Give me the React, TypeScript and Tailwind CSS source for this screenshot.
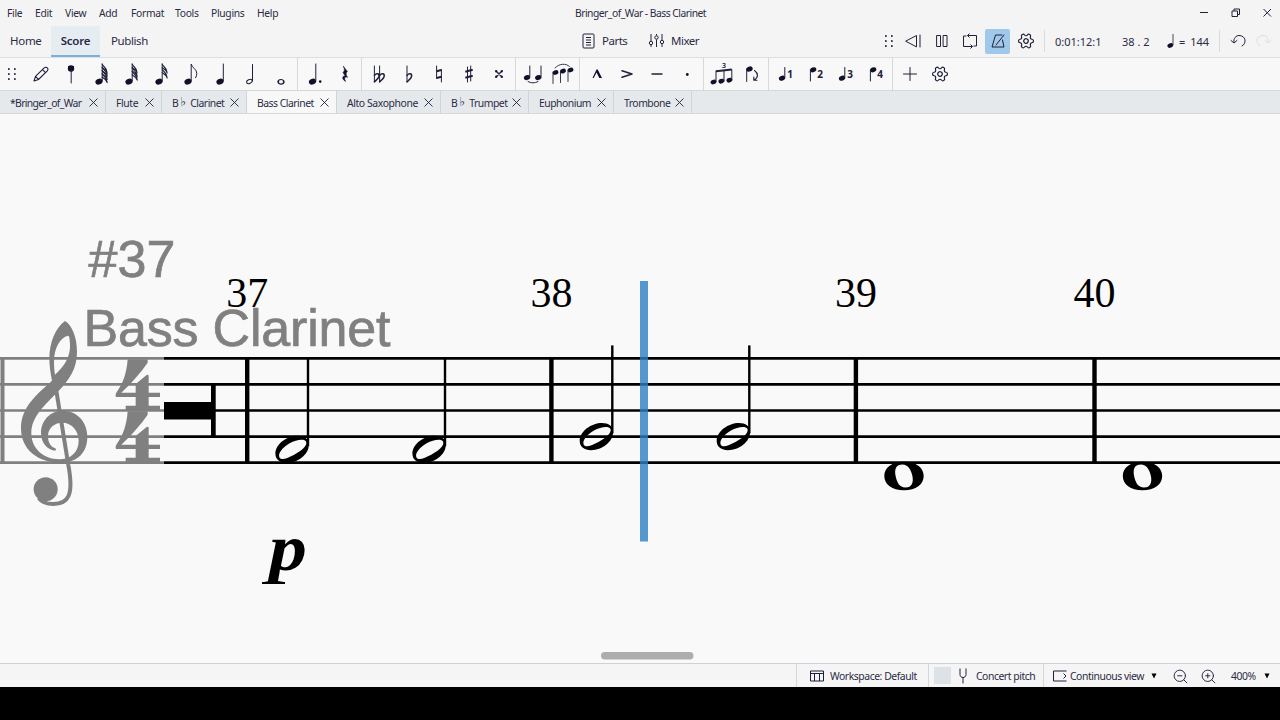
import { ReactNode } from "react";
import { Settings, ZoomIn, ZoomOut } from "lucide-react";
import clsx from "clsx";

const INK = "#20203a";

interface IconProps {
  children: ReactNode;
  className?: string;
}

// 30x32 cell, origin in the middle
function Cell({ children, className }: IconProps) {
  return (
    <svg
      viewBox="-15 -16 30 32"
      className={clsx("h-8 w-[30px] shrink-0", className)}
      fill="none"
      stroke={INK}
      strokeWidth={1}
      strokeLinecap="round"
      strokeLinejoin="round"
    >
      {children}
    </svg>
  );
}

function Head({ x, y, r = 3.7 }: { x: number; y: number; r?: number }) {
  return (
    <ellipse
      cx={x}
      cy={y}
      rx={r}
      ry={r * 0.76}
      transform={`rotate(-22 ${x} ${y})`}
      fill="#10102a"
      stroke="none"
    />
  );
}

function Gear({ className }: { className?: string }) {
  return (
    <svg viewBox="-12 -12 24 24" className={clsx("shrink-0", className)} fill="none" stroke={INK}>
      <g transform="rotate(30)">
        <Settings x={-12} y={-12} size={24} strokeWidth={1.6} color={INK} />
      </g>
    </svg>
  );
}

function Grip() {
  return (
    <svg viewBox="0 0 10 14" className="h-3.5 w-2.5 shrink-0" fill={INK}>
      {[2, 7, 12].map((y) => (
        <g key={y}>
          <rect x={1} y={y - 0.8} width={1.7} height={1.7} />
          <rect x={7} y={y - 0.8} width={1.7} height={1.7} />
        </g>
      ))}
    </svg>
  );
}

function Divider({ className }: { className?: string }) {
  return (
    <div className={clsx("flex h-8 w-1 shrink-0 pl-px", className)}>
      <div className="h-full w-px bg-[#d3d9dc]" />
    </div>
  );
}

function Flag({ y, x = 0.5 }: { y: number; x?: number }) {
  return (
    <path
      d={`M${x} ${y}c.6 2.800 5.200 3.600 5 9c-.8-3-2.800-4-5-5.400`}
      strokeWidth={1.1}
    />
  );
}

function Flat({ x }: { x: number }) {
  return (
    <g>
      <path d={`M${x} -8V8`} />
      <path d={`M${x} 1.4c2-2.4 5-2 4.6.8c-.3 2.400-2.600 4-4.600 5.600`} strokeWidth={1.5} />
    </g>
  );
}

const durations: ReactNode[] = [
  <path key="p" d="M-7 7l1.500-4.600L3.200-6.100c1-1 2.400-.9 3.200 0c.8.8.8 2-.1 2.900L-2.500 5.500zM-5.500 2.400l3 3M1.500-4.400l3 3" strokeWidth={1.1} />,
  <g key="l">
    <circle cx={0} cy={-5.500} r={3.200} fill="#10102a" stroke="none" />
    <path d="M-3-8h6v3h-6z" fill="#10102a" stroke="none" />
    <path d="M.2-4V9" />
  </g>,
  <g key="64">
    <Head x={-2} y={7.600} />
    <path d="M1.200 7V-10" />
    {[-10, -6.800, -3.600, -0.400].map((y) => (
      <Flag key={y} y={y} x={1.2} />
    ))}
  </g>,
  <g key="32">
    <Head x={-2} y={7.600} />
    <path d="M1.200 7V-10" />
    {[-10, -6.400, -2.800].map((y) => (
      <Flag key={y} y={y} x={1.2} />
    ))}
  </g>,
  <g key="16">
    <Head x={-2} y={7.600} />
    <path d="M1.200 7V-10" />
    <Flag y={-10} x={1.2} />
    <Flag y={-5} x={1.2} />
  </g>,
  <g key="8">
    <Head x={-3} y={7.600} />
    <path d="M.2 7V-10c.8 4 5.600 5 5.600 9.500c0 1.500-.5 3-1.200 4.200" />
  </g>,
  <g key="4">
    <Head x={-1} y={7.600} />
    <path d="M2.300 7V-10" />
  </g>,
  <g key="2">
    <ellipse cx={-1.600} cy={7.500} rx={2.900} ry={1.900} transform="rotate(-25 -1.600 7.500)" />
    <path d="M1.500 7V-9.500" />
  </g>,
  <g key="1">
    <ellipse cx={0} cy={7.800} rx={2.900} ry={2.300} strokeWidth={1.200} />
    <path d="M-2.600 7v1.600M2.600 7v1.600" strokeWidth={1.500} />
  </g>,
];

const dots: ReactNode[] = [
  <g key="d">
    <Head x={-2.500} y={7.600} />
    <path d="M.8 7V-10" />
    <circle cx={5.200} cy={7.600} r={1.300} fill="#10102a" stroke="none" />
  </g>,
  <path
    key="r"
    d="M-1.500-7.500L2.400-2.500C.8-1 .6.4 2.600 3.400C.2 2.400-1.400 3.600.6 7.400C-3.400 5.400-3 1.400.2 2L-2-1.600C-.2-3.200-.2-4.600-1.500-7.500z"
    fill="#10102a"
    strokeWidth={0.6}
  />,
];

const accidentals: ReactNode[] = [
  <g key="bb">
    <Flat x={-4.600} />
    <Flat x={0.600} />
  </g>,
  <Flat key="b" x={-2} />,
  <g key="n">
    <path d="M-2.400-8V4.500M2.400-4.500V8" />
    <path d="M-2.400-2.800L2.400-4M-2.400 4L2.400 2.800" strokeWidth={2} strokeLinecap="butt" />
  </g>,
  <g key="s">
    <path d="M-1.500-7V8M1.700-8V7" />
    <path d="M-3.700-2.200L3.700-4.200M-3.700 3.800L3.700 1.800" strokeWidth={2} strokeLinecap="butt" />
  </g>,
  <g key="x">
    <path d="M-3-3L3 3M3-3L-3 3" strokeWidth={1.400} />
    <path d="M-3.800-3.800h2v2h-2zM1.800-3.800h2v2h-2zM-3.800 1.800h2v2h-2zM1.800 1.800h2v2h-2z" fill="#10102a" stroke="none" />
  </g>,
];

const ties: ReactNode[] = [
  <g key="t">
    <Head x={-6} y={3.600} r={3.200} />
    <Head x={5.200} y={3.600} r={3.200} />
    <path d="M-3.200 3V-8M8-8V3M-5 7.500c3 1.800 7 1.800 10 0" />
  </g>,
  <g key="s">
    <Head x={-7.500} y={-1.500} r={3} />
    <Head x={0} y={-2.900} r={3} />
    <Head x={7.500} y={-4} r={3} />
    <path d="M-10 9.500V-1M-2.500 8.500V-2.500M5 7.500V-3.500M-8-6c4-4.500 11-5 14.500-1.500" strokeWidth={0.9} />
  </g>,
];

const articulations: ReactNode[] = [
  <path key="m" d="M-4.500 4L-.5-4.500h1.200L5 4H2.300L-.4-1.500L-3.300 4z" fill="#10102a" stroke="none" />,
  <path key="a" d="M-5-3.300L5 0L-5 3.300" strokeWidth={1.500} />,
  <path key="t" d="M-5 0H5" strokeWidth={1.300} />,
  <circle key="s" cx={0.300} cy={0.500} r={1.400} fill="#10102a" stroke="none" />,
];

const tuplets: ReactNode[] = [
  <g key="3">
    <Head x={-8.500} y={8} r={3} />
    <Head x={-0.600} y={7.200} r={3} />
    <Head x={7.400} y={6.200} r={3} />
    <path d="M-6-3V7.500M2-3.500V7M9.800-4.200V6" />
    <path d="M-6-2.800L9.800-4.400" strokeWidth={2} strokeLinecap="butt" />
    <text x={2} y={-6} textAnchor="middle" fontSize={7.5} fontWeight={600} fontFamily="Noto Sans" fill={INK} stroke="none">
      3
    </text>
  </g>,
  <g key="f">
    <Head x={-2.500} y={-5} r={3.300} />
    <path d="M-5.300-5V7.500" />
    <path d="M2.500-3.500C6.500-.5 6.500 3.500 2 6M1.800 3v3.300h3.200" strokeWidth={1.100} />
  </g>,
];

function Voice({ n }: { n: number }) {
  const up = n % 2 === 1;
  return (
    <Cell>
      {up ? (
        <>
          <Head x={-4} y={4.200} r={3.200} />
          <path d="M-1.200 4V-6.500" />
        </>
      ) : (
        <>
          <Head x={-2.800} y={-4.200} r={3.200} />
          <path d="M-5.600-4V7" />
        </>
      )}
      <text
        x={4}
        y={4}
        textAnchor="middle"
        fontSize={10}
        fontWeight={700}
        fontFamily="Noto Sans"
        fill={INK}
        stroke="none"
      >
        {n}
      </text>
    </Cell>
  );
}

function Group({ items }: { items: ReactNode[] }) {
  return (
    <div className="flex shrink-0">
      {items.map((item, i) => (
        <Cell key={i}>{item}</Cell>
      ))}
    </div>
  );
}

const menu = [
  { label: "File", width: "w-7" },
  { label: "Edit", width: "w-[30px]" },
  { label: "View", width: "w-[34px]" },
  { label: "Add", width: "w-8" },
  { label: "Format", width: "w-11" },
  { label: "Tools", width: "w-9" },
  { label: "Plugins", width: "w-[46px]" },
  { label: "Help", width: "w-8" },
];

function TitleBar() {
  return (
    <header className="flex h-[26px] items-center pl-[7px] text-[10.3px] tracking-[-0.3px]">
      {menu.map((m) => (
        <span key={m.label} className={clsx("shrink-0 pt-0.5", m.width)}>
          {m.label}
        </span>
      ))}
      <span className="ml-[286px] w-[134px] shrink-0 pt-0.5 tracking-[-0.5px] whitespace-nowrap">
        Bringer_of_War - Bass Clarinet
      </span>
      <svg viewBox="0 0 80 12" className="mr-2 ml-auto h-3 w-20" fill="none" stroke={INK} strokeWidth={1}>
        <path d="M8 5.500h8" />
        <path d="M40 4h5.500v5.500H40zM42 4V2h5.500v5.500h-2" />
        <path d="M71.500 2l7.500 7.500M79 2L71.500 9.500" />
      </svg>
    </header>
  );
}

function MainToolbar() {
  return (
    <div className="flex h-8 items-center border-b border-[#dcdfe1] pb-px text-[11.5px]">
      <span className="w-[51px] pl-[10px] tracking-[-0.3px]">Home</span>
      <span className="-mb-px flex h-[31px] w-[49px] items-center justify-center self-end border-b-2 border-[#7db0d8] bg-[#e5edf3] font-semibold tracking-[-0.2px]">
        Score
      </span>
      <span className="w-[482px] pl-[11px] tracking-[-0.4px]">Publish</span>
      <svg viewBox="0 0 13 16" className="h-4 w-[13px] shrink-0" fill="none" stroke={INK}>
        <rect x={1} y={1} width={11} height={14} rx={1} />
        <path d="M4 4.500h5M4 7h5M4 9.500h5M4 12h5" />
      </svg>
      <span className="ml-[7px] w-[46px] tracking-[-0.5px]">Parts</span>
      <svg viewBox="0 0 17 16" className="h-4 w-[17px] shrink-0" fill="none" stroke={INK}>
        <path d="M3 1v7M3 12v2M8.500 1v1.500M8.500 6.500V14M14 1v6M14 11v3" />
        <circle cx={3} cy={10} r={1.700} />
        <circle cx={8.500} cy={4.500} r={1.700} />
        <circle cx={14} cy={9} r={1.700} />
      </svg>
      <span className="ml-1.5 w-[213px] tracking-[-0.5px]">Mixer</span>
      <Grip />
      <div className="ml-[5px] flex items-center">
        <Cell className="-mr-px">
          <path d="M-8 0L2.500-5.500V5.500zM6-6V6" />
        </Cell>
        <Cell className="-mr-px -ml-px">
          <path d="M-5-5.500h3.500v11H-5zM1.500-5.500H5v11H1.500z" />
        </Cell>
        <Cell className="-mr-px -ml-px">
          <path d="M-3.500-5H-6.500V5.500H2.500M3.500 5H6.500V-5.500H-2.500M-.5-7.500l-2 2l2 2M.5 3.500l2 2l-2 2" strokeLinecap="butt" />
        </Cell>
        <span className="ml-px flex h-[25px] w-[25px] items-center justify-center overflow-hidden rounded-[2px] bg-[#a0c8ea]">
          <Cell>
            <path d="M4-6H-2.500L-6 6H6L4.500-1M-2 4L6-6" />
          </Cell>
        </span>
        <Gear className="ml-[7px] h-[18px] w-[18px]" />
      </div>
      <div className="ml-[9px] h-[22px] w-px bg-[#d8dbde]" />
      <span className="ml-2.5 w-[67px] pt-0.5 text-[11px]">0:01:12:1</span>
      <span className="w-[45px] pt-0.5 text-[11px]">38 . 2</span>
      <svg viewBox="0 0 8 16" className="h-4 w-2 shrink-0" fill="none" stroke={INK}>
        <Head x={3.300} y={12.500} r={3} />
        <path d="M6 12V1" strokeWidth={0.8} />
      </svg>
      <span className="ml-1 w-10 pt-0.5 text-[11px] whitespace-nowrap [word-spacing:2px]">= 144</span>
      <div className="h-[22px] w-px bg-[#d8dbde]" />
      <Cell className="ml-[3px] -mr-1">
        <path d="M-7-.5l3 2.500l3-2.500M-4 1.500C-5-3-1.500-5.500 1-5.500C8-5.500 9 2.500 4 5" />
      </Cell>
      <Cell className="-mr-2 opacity-10">
        <path d="M7-.5l-3 2.500l-3-2.500M4 1.500C5-3 1.500-5.500-1-5.500C-8-5.500-9 2.500-4 5" />
      </Cell>
    </div>
  );
}

function NoteToolbar() {
  return (
    <div className="flex h-8 items-center bg-[#f8f8f9]">
      <div className="flex w-[26px] pl-[7px]">
        <Grip />
      </div>
      <Group items={durations} />
      <Divider />
      <Group items={dots} />
      <Divider />
      <Group items={accidentals} />
      <Divider />
      <Group items={ties} />
      <Divider />
      <Group items={articulations} />
      <Divider className="mr-px" />
      <Group items={tuplets} />
      <Divider />
      {[1, 2, 3, 4].map((n) => (
        <Voice key={n} n={n} />
      ))}
      <Divider />
      <Cell>
        <path d="M-6.500 0H6.500M0-6.500V6.500" />
      </Cell>
      <Gear className="ml-[5.5px] h-[18px] w-[18px]" />
    </div>
  );
}

const tabs = [
  { label: "*Bringer_of_War", width: "w-[106px]", tracking: "tracking-[-0.65px]" },
  { label: "Flute", width: "w-14", tracking: "tracking-[-0.4px]" },
  { label: "B♭ Clarinet", width: "w-[85px]", tracking: "tracking-[-0.5px]" },
  { label: "Bass Clarinet", width: "w-[90px]", tracking: "tracking-[-0.5px]", active: true },
  { label: "Alto Saxophone", width: "w-[104px]", tracking: "tracking-[-0.4px]" },
  { label: "B♭ Trumpet", width: "w-[88px]", tracking: "tracking-[-0.5px]" },
  { label: "Euphonium", width: "w-[85px]", tracking: "tracking-[-0.5px]" },
  { label: "Trombone", width: "w-[78px]", tracking: "tracking-[-0.5px]" },
];

function TabLabel({ label }: { label: string }) {
  if (!label.includes("♭")) return <span className="pt-[3px]">{label}</span>;
  const [before, after] = label.split("♭");
  return (
    <span className="flex items-center pt-[3px]">
      {before}
      <span className="w-[9px] pb-0.5 pl-0.5 font-['DejaVu_Sans'] text-[12px] leading-3">♭</span>
      <span className="pl-[3px]">{after.trim()}</span>
    </span>
  );
}

function Tabs() {
  return (
    <div className="flex h-6 border-y border-[#d3d8db] bg-[#e5e9ec] text-[10.4px]">
      {tabs.map((t) => (
        <div
          key={t.label}
          className={clsx(
            "flex shrink-0 items-center justify-between border-r border-[#ced4d7] pr-[7px] pl-2.5 whitespace-nowrap",
            t.width,
            t.tracking,
            t.active && "bg-[#f8f8f9]"
          )}
        >
          <TabLabel label={t.label} />
          <svg viewBox="0 0 9 9" className="mt-px h-[9px] w-[9px]" stroke={INK} strokeWidth={0.9}>
            <path d="M.5.5l8 8M8.500.5l-8 8" />
          </svg>
        </div>
      ))}
    </div>
  );
}

const staffLines = [358.4, 384.4, 410.5, 436.6, 462.6];
const halfNotes = [
  { x: 292.2, y: 449.3 },
  { x: 429.2, y: 449.3 },
  { x: 596.5, y: 436.6 },
  { x: 733.5, y: 436.6 },
];
const measures = [
  { x: 247.2, n: 37 },
  { x: 551.4, n: 38 },
  { x: 855.9, n: 39 },
  { x: 1094.5, n: 40 },
];

function Four({ y }: { y: number }) {
  return (
    <path
      transform={`translate(0 ${y})`}
      d="M383 418H443V428C424 456 392 492 364 518H407V492L440 465Q446 462 446 468V518H480V531H446V557H480V573H377V557H407V531H348Q344 526 349 518C370 490 380 458 383 418Z"
    />
  );
}

function Score() {
  return (
    <main className="h-[549px] bg-[#f9f9f9]">
      <svg viewBox="0 114 1280 549" className="block h-full w-full">
        <g stroke="#000" strokeWidth={2.700}>
          {staffLines.map((y) => (
            <path key={y} d={`M164 ${y}H1280`} />
          ))}
        </g>
        <g stroke="#808080" strokeWidth={2.700}>
          {staffLines.map((y) => (
            <path key={y} d={`M0 ${y}H164`} />
          ))}
        </g>
        <rect x={0.500} y={357} width={4} height={107} fill="#808080" />

        {measures.map((m) => (
          <g key={m.n}>
            <rect x={m.x - 2.200} y={357} width={4.400} height={107} />
            <text x={m.x} y={306.500} textAnchor="middle" fontSize={42} fontFamily="Liberation Serif">
              {m.n}
            </text>
          </g>
        ))}

        <rect x={164} y={402} width={48} height={17.500} />
        <rect x={211} y={384} width={4.700} height={53.500} />

        {halfNotes.map((h) => (
          <g key={h.x} transform={`translate(${h.x} ${h.y})`}>
            <path
              fillRule="evenodd"
              d="M-16.800 4.500C-16.800-5.500-5-13.600 5.500-13.600C12-13.600 16.600-10.500 16.600-4.500C16.600 5.500 5.500 13.600-5.500 13.600C-12 13.600-16.800 10.500-16.800 4.500ZM-12.600 8.500C-10.500 11.500-4 8.500 2 5.500C8.500 2 15.500-3.500 14-7.500C12-11 4-9.500-2.500-6C-9-2.200-15 4-12.600 8.500Z"
            />
            <rect x={14.600} y={-91.200} width={2.400} height={88} />
          </g>
        ))}

        {[904, 1142.500].map((x) => (
          <path
            key={x}
            transform={`translate(${x} 476)`}
            fillRule="evenodd"
            d="M0-14.200C12-14.200 19.700-8.500 19.700 0C19.700 8.500 12 14.200 0 14.200C-12 14.200-19.700 8.500-19.700 0C-19.700-8.500-12-14.200 0-14.200ZM-1.500-11.600C-8-11.600-9.600-7-8.500-.5C-7.200 6.500-4.500 11.500 1.500 11.500C8 11.500 9.500 6.500 8.500 .5C7.200-6.500 4-11.600-1.500-11.600Z"
          />
        ))}

        <text
          transform="translate(269 569.500) scale(1.150 1)"
          fontSize={66}
          fontWeight={700}
          fontStyle="italic"
          fontFamily="Liberation Serif"
        >
          p
        </text>
        <path d="M262 583H285" stroke="#000" strokeWidth={2} />

        <g fill="#808080" stroke="#808080" strokeWidth={0.700} fontFamily="Liberation Sans" fontSize={52}>
          <text x={88.500} y={277} textLength={87}>#37</text>
          <text x={83.500} y={345.500} textLength={307}>Bass Clarinet</text>
        </g>

        {/* clef and time signature */}
        <g transform="translate(0 220) scale(.33333)" fill="#808080">
          <path
            fillRule="evenodd"
            d="M195 303C165 325 148 370 148 415C148 440 152 460 156 482C112 522 63 560 63 625C63 690 115 728 180 728C235 728 262 695 262 650C262 602 228 572 188 572C150 572 123 602 123 640C123 670 145 692 166 692Q170 688 166 685C150 680 143 663 144 645C146 622 165 608 187 608C215 608 236 632 236 662C236 698 210 718 178 718C130 718 94 685 94 640C94 590 135 555 172 517C210 477 231 445 231 395C231 350 215 315 195 303ZM204 347C180 352 162 385 162 425C162 440 163 452 165 464C195 437 212 408 210 372C209 355 208 347 204 347Z"
          />
          <path
            d="M167 500L205 735C222 825 205 852 160 852C142 852 124 846 116 834"
            fill="none"
            stroke="#808080"
            strokeWidth={12}
          />
          <circle cx={137} cy={808} r={36} />
          <Four y={0} />
          <Four y={156} />
        </g>

        <rect x={640} y={281} width={8} height={260.500} fill="#2b80c2" fillOpacity={0.8} />
        <rect x={601} y={652} width={92.500} height={7.500} rx={3.700} fill="#adadad" />
      </svg>
    </main>
  );
}

function StatusBar() {
  return (
    <footer className="flex h-6 items-center justify-end border-t border-[#cfd2d4] bg-[#f5f5f6] text-[10.4px] tracking-[-0.45px] whitespace-nowrap">
      <div className="flex h-full w-[132px] shrink-0 items-center border-l border-[#d3d7da] pt-px pl-[13px]">
        <svg viewBox="0 0 14 12" className="h-3 w-3.5" fill="none" stroke={INK}>
          <path d="M.5 1h13v10H.500zM.5 3.500h13M4.500 3.500V11M9.500 3.500V11" />
        </svg>
        <span className="ml-1.5 pt-px">Workspace: Default</span>
      </div>
      <div className="flex h-full w-[115px] shrink-0 items-center border-l border-[#d3d7da] pl-[5px]">
        <span className="h-[17px] w-[17px] bg-[#dde2e6]" />
        <svg viewBox="0 0 10 16" className="ml-[7px] h-4 w-2.5" fill="none" stroke={INK}>
          <path d="M2 .5V6.500C2 10.500 8 10.500 8 6.500V.5M5 9.500V15.500" />
        </svg>
        <span className="ml-2 pt-0.5">Concert pitch</span>
      </div>
      <div className="flex h-full w-[237px] shrink-0 items-center border-l border-[#d3d7da] pt-px pl-[9px]">
        <svg viewBox="0 0 14 12" className="h-3 w-3.5 shrink-0" fill="none" stroke={INK}>
          <path d="M13.500 1H.5V11H13.500M10.500 3.500L13 6l-2.500 2.500" />
        </svg>
        <span className="ml-[3px] w-[81px] pt-px">Continuous view</span>
        <svg viewBox="0 0 6 6" className="h-1.5 w-1.5 shrink-0">
          <path d="M.5.5h5L3 5.500z" />
        </svg>
        <ZoomOut className="ml-[15px] h-[17px] w-[17px] shrink-0" strokeWidth={1.400} />
        <ZoomIn className="ml-[11px] h-[17px] w-[17px] shrink-0" strokeWidth={1.400} />
        <span className="ml-[14px] w-[33px] pt-px">400%</span>
        <svg viewBox="0 0 6 6" className="h-1.5 w-1.5 shrink-0">
          <path d="M.5.5h5L3 5.500z" />
        </svg>
      </div>
    </footer>
  );
}

export default function App() {
  return (
    <div className="flex h-[720px] w-[1280px] flex-col overflow-hidden bg-black font-['Noto_Sans',sans-serif] text-[#2b2b44]">
      <div className="bg-[#f4f4f5]">
        <TitleBar />
        <MainToolbar />
      </div>
      <NoteToolbar />
      <Tabs />
      <Score />
      <StatusBar />
    </div>
  );
}
